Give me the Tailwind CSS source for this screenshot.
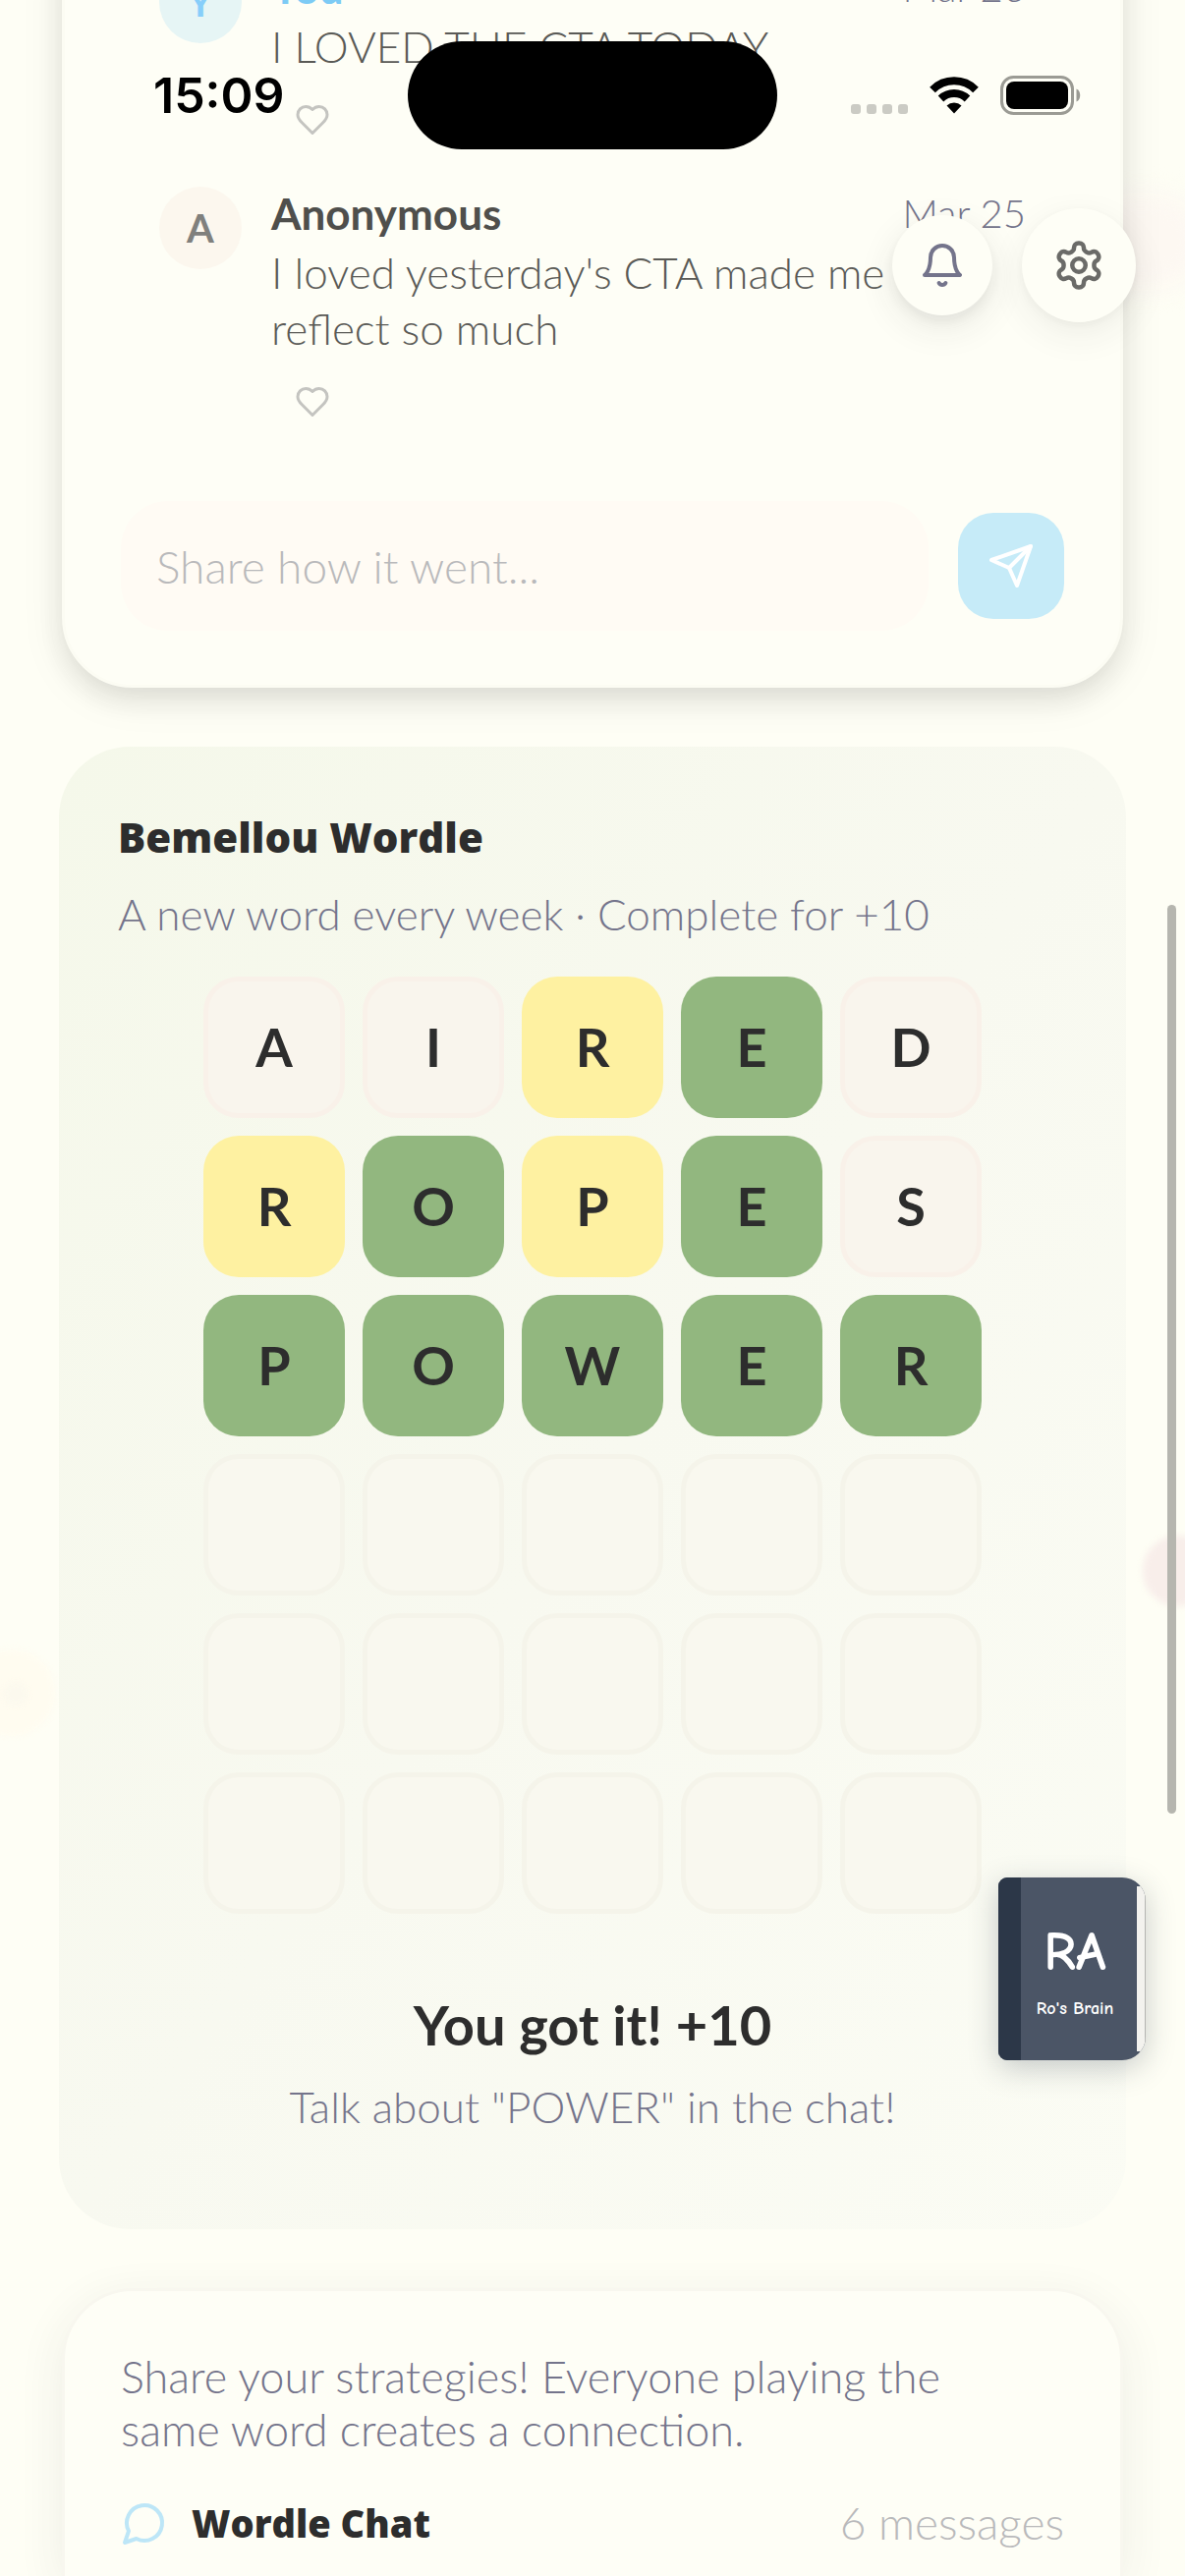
<!DOCTYPE html>
<html lang="en">
<head>
  <meta charset="UTF-8" />
  <meta name="viewport" content="width=device-width, initial-scale=1" />
  <title>Bemellou</title>
  <script src="https://cdn.jsdelivr.net/npm/@tailwindcss/browser@4"></script>
</head>
<body class="relative min-h-screen flex flex-col overflow-hidden bg-[#fefef5] font-['Lato',sans-serif] text-[#2d2d2d]">

  <!-- Background blobs -->
  <div class="absolute -right-[29px] top-[1563px] size-[72px] rounded-full bg-[#f8eeea] blur-[3px]"></div>
  <div class="absolute -left-[32px] top-[1679px] size-[88px] rounded-full bg-[#fffcf0] blur-[3px]"></div>
  <div class="absolute left-[4px] top-[1712px] size-[24px] rounded-full bg-[#fcf9ee] blur-[3px]"></div>
  <div class="absolute -right-[20px] top-[196px] h-[100px] w-[130px] rounded-full bg-[#fdf8f2] blur-[12px]"></div>

  <main class="relative flex flex-1 flex-col gap-[60px] px-[60px]">

    <!-- Comments -->
    <section class="mx-[3px] -mt-[103px] rounded-[72px] border-[3px] border-[#fcfcf3] bg-[#fefef6] px-[57px] pt-[60px] pb-[55px] shadow-[0_9px_48px_rgba(45,45,45,0.07),0_12px_24px_rgba(45,45,45,0.11)]">
      <ul class="flex flex-col gap-[38px] px-[39px]">
        <li class="flex gap-[30px]">
          <div class="flex size-[84px] shrink-0 items-center justify-center rounded-full bg-[#e6f5f5] text-[40px] font-bold text-[#87cefa]">Y</div>
          <div class="flex-1 text-[#5a5a56]">
            <div class="flex items-center justify-between text-[44px] leading-[54px]">
              <span class="font-bold text-[#7dcbf5]">You</span>
              <time class="text-[40px] font-light text-[#74748b]">Mar 26</time>
            </div>
            <p class="mt-[5px] text-[44px] leading-[57px] font-light">I LOVED THE CTA TODAY</p>
            <button type="button" aria-label="Like" class="mt-[16px] flex h-[60px] items-center px-[24px] text-[#c4c4c0]">
              <svg class="size-[36px]" viewBox="0 0 24 24" fill="none" stroke="currentColor" stroke-width="2" stroke-linecap="round" stroke-linejoin="round"><path d="M19 14c1.49-1.46 3-3.21 3-5.5A5.5 5.5 0 0 0 16.5 3c-1.76 0-3 .5-4.5 2-1.5-1.5-2.74-2-4.5-2A5.5 5.5 0 0 0 2 8.500c0 2.300 1.500 4.050 3 5.500l7 7Z"/></svg>
            </button>
          </div>
        </li>
        <li class="flex gap-[30px]">
          <div class="flex size-[84px] shrink-0 items-center justify-center rounded-full bg-[#fcf7ee] text-[40px] font-bold text-[#80807d]">A</div>
          <div class="flex-1 text-[#5a5a56]">
            <div class="flex items-center justify-between text-[44px] leading-[54px]">
              <span class="font-bold text-[#4f4f4c]">Anonymous</span>
              <time class="text-[40px] font-light text-[#74748b]">Mar 25</time>
            </div>
            <p class="mt-[5px] text-[44px] leading-[57px] font-light">I loved yesterday's CTA made me<br />reflect so much</p>
            <button type="button" aria-label="Like" class="mt-[16px] flex h-[60px] items-center px-[24px] text-[#c4c4c0]">
              <svg class="size-[36px]" viewBox="0 0 24 24" fill="none" stroke="currentColor" stroke-width="2" stroke-linecap="round" stroke-linejoin="round"><path d="M19 14c1.49-1.46 3-3.21 3-5.5A5.5 5.5 0 0 0 16.5 3c-1.76 0-3 .5-4.5 2-1.5-1.5-2.74-2-4.5-2A5.5 5.5 0 0 0 2 8.500c0 2.300 1.500 4.050 3 5.500l7 7Z"/></svg>
            </button>
          </div>
        </li>
      </ul>
      <form class="mt-[71px] flex items-center gap-[30px]">
        <input type="text" aria-label="Share how it went" placeholder="Share how it went..." class="h-[132px] min-w-0 flex-1 rounded-[48px] bg-[#fffbf4] px-[36px] text-[46px] font-light placeholder:text-[#b9b9bb] focus:outline-none" />
        <button type="button" aria-label="Send" class="flex size-[108px] items-center justify-center rounded-[36px] bg-[#c6ebf8] text-white">
          <svg class="size-[48px]" viewBox="0 0 24 24" fill="none" stroke="currentColor" stroke-width="2" stroke-linecap="round" stroke-linejoin="round"><path d="m22 2-7 20-4-9-9-4Z"/><path d="M22 2 11 13"/></svg>
        </button>
      </form>
    </section>

    <!-- Wordle -->
    <section class="rounded-[72px] bg-linear-to-br from-[#f5f8ea] via-[#f8f9f0] to-[#fbfcf4] px-[60px] pt-[62px] pb-[95px]">
      <h2 class="font-['Open_Sans',sans-serif] text-[42px] leading-[60px] font-extrabold">Bemellou Wordle</h2>
      <p class="mt-[18px] text-[44px] leading-[60px] font-light text-[#74748b]">A new word every week · Complete for +10</p>
      <div id="board" class="mt-[34px] grid grid-cols-[repeat(5,144px)] justify-center gap-[18px]"></div>
      <p class="mt-[80px] text-center text-[56px] leading-[66px] font-bold">You got it! +10</p>
      <p class="mt-[20px] text-center text-[44px] leading-[60px] font-light text-[#74748b]">Talk about "POWER" in the chat!</p>
    </section>

    <!-- Wordle chat -->
    <section class="mx-[3px] flex-1 rounded-t-[72px] border-[3px] border-b-0 border-[#f8f7ef] bg-[#fefef6] px-[57px] pt-[60px] shadow-[0_12px_48px_rgba(45,45,45,0.08)]">
      <p class="text-[45px] leading-[54px] font-light text-[#74748b]">Share your strategies! Everyone playing the<br />same word creates a connection.</p>
      <div class="mt-[38px] flex items-center">
        <svg class="size-[48px] text-[#bde6f7]" viewBox="0 0 24 24" fill="none" stroke="currentColor" stroke-width="2" stroke-linecap="round" stroke-linejoin="round"><path d="M7.900 20A9 9 0 1 0 4 16.100L2 22Z"/></svg>
        <h2 class="ml-[24px] font-['Open_Sans',sans-serif] text-[38px] leading-[60px] font-extrabold">Wordle Chat</h2>
        <span class="ml-auto text-[46px] leading-[60px] font-light text-[#b9b9bb]">6 messages</span>
      </div>
    </section>
  </main>

  <!-- Status bar -->
  <div class="absolute inset-x-0 top-[42px] flex h-[110px] items-center justify-between pr-[106px] pl-[156px]">
    <span class="font-['Inter',sans-serif] text-[50px] leading-[60px] font-semibold text-black">15:09</span>
    <div class="flex items-center gap-[22px]">
      <div class="mt-[28px] flex gap-[6px]">
        <i class="size-[10px] rounded-[3px] bg-[#cbcbc4]"></i>
        <i class="size-[10px] rounded-[3px] bg-[#cbcbc4]"></i>
        <i class="size-[10px] rounded-[3px] bg-[#cbcbc4]"></i>
        <i class="size-[10px] rounded-[3px] bg-[#cbcbc4]"></i>
      </div>
      <svg class="h-[38px] w-[50px]" viewBox="0 0 50 38" fill="none" stroke="#000" stroke-width="8"><path d="M3 13.500a31 31 0 0 1 44 0"/><path d="M11.500 22.500a19.500 19.500 0 0 1 27 0"/><path d="M25 37.500l-7.500-8a11 11 0 0 1 15 0Z" fill="#000" stroke="none"/></svg>
      <svg class="h-[40px] w-[82px]" viewBox="0 0 82 40" fill="none"><rect x="1.500" y="1.500" width="72" height="37" rx="12" stroke="#9b9b94" stroke-width="3"/><rect x="6" y="6" width="63" height="28" rx="8" fill="#000"/><path d="M77.500 13.500c5 2 5 11 0 13Z" fill="#9b9b94"/></svg>
    </div>
  </div>
  <div class="absolute top-[42px] left-1/2 h-[110px] w-[376px] -translate-x-1/2 rounded-full bg-black"></div>

  <!-- Floating actions -->
  <div class="absolute top-[212px] right-[50px] flex items-center gap-[30px]">
    <button type="button" aria-label="Notifications" class="flex size-[102px] items-center justify-center rounded-full bg-[#fefef6] text-[#74748b] shadow-[0_12px_36px_rgba(45,45,45,0.10),0_6px_12px_rgba(45,45,45,0.06)]">
      <svg class="size-[48px]" viewBox="0 0 24 24" fill="none" stroke="currentColor" stroke-width="2" stroke-linecap="round" stroke-linejoin="round"><path d="M6 8a6 6 0 0 1 12 0c0 7 3 9 3 9H3s3-2 3-9"/><path d="M10.300 21a1.940 1.940 0 0 0 3.400 0"/></svg>
    </button>
    <button type="button" aria-label="Settings" class="flex size-[116px] items-center justify-center rounded-full bg-[#fefef6] text-[#6b6b68] shadow-[0_12px_36px_rgba(45,45,45,0.08),0_3px_8px_rgba(45,45,45,0.04)]">
      <svg class="size-[54px]" viewBox="0 0 24 24" fill="none" stroke="currentColor" stroke-width="2" stroke-linecap="round" stroke-linejoin="round"><path d="M12.220 2h-.44a2 2 0 0 0-2 2v.18a2 2 0 0 1-1 1.730l-.43.25a2 2 0 0 1-2 0l-.15-.08a2 2 0 0 0-2.730.730l-.22.380a2 2 0 0 0 .73 2.730l.15.1a2 2 0 0 1 1 1.720v.51a2 2 0 0 1-1 1.740l-.15.09a2 2 0 0 0-.73 2.730l.22.380a2 2 0 0 0 2.730.730l.15-.08a2 2 0 0 1 2 0l.43.250a2 2 0 0 1 1 1.730V20a2 2 0 0 0 2 2h.44a2 2 0 0 0 2-2v-.18a2 2 0 0 1 1-1.730l.43-.25a2 2 0 0 1 2 0l.15.080a2 2 0 0 0 2.730-.73l.22-.39a2 2 0 0 0-.73-2.730l-.15-.08a2 2 0 0 1-1-1.740v-.5a2 2 0 0 1 1-1.740l.15-.09a2 2 0 0 0 .73-2.730l-.22-.38a2 2 0 0 0-2.730-.73l-.15.080a2 2 0 0 1-2 0l-.43-.25a2 2 0 0 1-1-1.730V4a2 2 0 0 0-2-2z"/><circle cx="12" cy="12" r="3"/></svg>
    </button>
  </div>

  <!-- Journal -->
  <a href="#journal" class="absolute top-[1911px] right-[40px] flex h-[186px] w-[150px] overflow-hidden rounded-l-[9px] rounded-r-[24px] bg-[#4b5566] font-['Comic_Neue',cursive] text-white shadow-[0_8px_30px_rgba(45,55,72,0.25)]">
    <span class="w-[23px] bg-[#2c3748]"></span>
    <span class="flex flex-1 flex-col items-center justify-center pt-[6px] pr-[8px]">
      <span class="text-[56px] leading-[60px] font-bold">RA</span>
      <span class="mt-[16px] text-[18px] leading-[24px] font-bold">Ro's Brain</span>
    </span>
    <span class="my-[9px] w-[9px] border-r border-[#b5b5b2] bg-[#f3f2ee]"></span>
  </a>

  <!-- Scroll indicator -->
  <div class="absolute top-[921px] right-[9px] h-[925px] w-[9px] rounded-full bg-[#b6b6af]"></div>

  <script>
    const board = document.getElementById('board');
    const guesses = ['AIRED', 'ROPES', 'POWER', '', '', ''];
    const marks = ['aapca', 'pcpca', 'ccccc', 'eeeee', 'eeeee', 'eeeee'];
    const styles = {
      a: 'bg-[#f9f5ed] border-[5px] border-[#f9f1e9]',
      p: 'bg-[#fef1a1]',
      c: 'bg-[#92b77f]',
      e: 'bg-[#f9f8ef] border-[5px] border-[#f5f4ea]',
    };

    guesses.forEach((guess, row) => {
      for (let i = 0; i < 5; i++) {
        const tile = document.createElement('div');
        tile.className = 'flex size-[144px] items-center justify-center rounded-[36px] text-[54px] leading-[66px] font-bold ' + styles[marks[row][i]];
        tile.textContent = guess[i] || '';
        board.appendChild(tile);
      }
    });
  </script>
</body>
</html>
